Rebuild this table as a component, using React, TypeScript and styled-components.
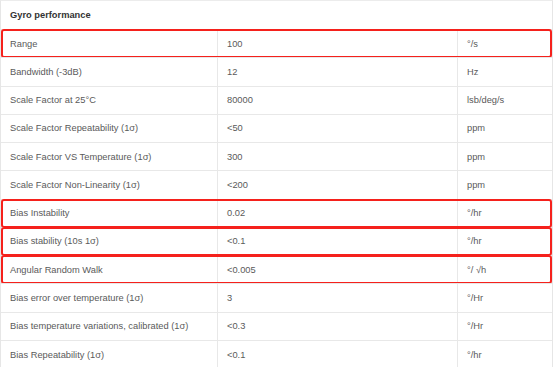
import styled, { createGlobalStyle } from 'styled-components'

const GlobalStyle = createGlobalStyle`
  html, body {
    margin: 0;
    padding: 0;
    background: #fff;
  }
  body {
    font-family: 'Liberation Sans', Arial, sans-serif;
    overflow: hidden;
  }
`

const StyledTable = styled.div`
  width: 553px;
  height: 367px;
  overflow: hidden;
  border-left: 1px solid #e6e6e6;
  border-right: 1px solid #e6e6e6;
  border-top: 1px solid #ececec;
  box-sizing: border-box;
`

const StyledHeader = styled.div`
  height: 28px;
  box-sizing: border-box;
  display: flex;
  align-items: center;
  padding-left: 9px;
  font-size: 9.3px;
  font-weight: 700;
  color: #333;
`

const StyledRow = styled.div<{ $marked?: boolean }>`
  position: relative;
  display: grid;
  grid-template-columns: 216px 240px 1fr;
  height: 28.27px;
  box-sizing: border-box;
  border-top: 1px solid #e8e8e8;
  &::after {
    content: '';
    display: ${({ $marked }) => ($marked ? 'block' : 'none')};
    position: absolute;
    top: -1px;
    bottom: -1px;
    left: 0;
    right: 0;
    border: 2px solid #f5211c;
    border-radius: 3px;
    pointer-events: none;
  }
`

const StyledCell = styled.div<{ $first?: boolean }>`
  display: flex;
  align-items: center;
  padding-left: 9px;
  font-size: 9.3px;
  color: #5a5a5a;
  white-space: nowrap;
  border-left: ${({ $first }) => ($first ? 'none' : '1px solid #e8e8e8')};
`

const rows = [
  { name: 'Range', value: '100', unit: '°/s', marked: true },
  { name: 'Bandwidth (-3dB)', value: '12', unit: 'Hz' },
  { name: 'Scale Factor at 25°C', value: '80000', unit: 'lsb/deg/s' },
  { name: 'Scale Factor Repeatability (1σ)', value: '<50', unit: 'ppm' },
  { name: 'Scale Factor VS Temperature (1σ)', value: '300', unit: 'ppm' },
  { name: 'Scale Factor Non-Linearity (1σ)', value: '<200', unit: 'ppm' },
  { name: 'Bias Instability', value: '0.02', unit: '°/hr', marked: true },
  { name: 'Bias stability (10s 1σ)', value: '<0.1', unit: '°/hr', marked: true },
  { name: 'Angular Random Walk', value: '<0.005', unit: '°/ √h', marked: true },
  { name: 'Bias error over temperature (1σ)', value: '3', unit: '°/Hr' },
  { name: 'Bias temperature variations, calibrated (1σ)', value: '<0.3', unit: '°/Hr' },
  { name: 'Bias Repeatability (1σ)', value: '<0.1', unit: '°/hr' },
]

const App = () => {
  return (
    <>
      <GlobalStyle />
      <StyledTable>
        <StyledHeader>Gyro performance</StyledHeader>
        {rows.map((row) => (
          <StyledRow key={row.name} $marked={row.marked}>
            <StyledCell $first>{row.name}</StyledCell>
            <StyledCell>{row.value}</StyledCell>
            <StyledCell>{row.unit}</StyledCell>
          </StyledRow>
        ))}
      </StyledTable>
    </>
  )
}

export default App
